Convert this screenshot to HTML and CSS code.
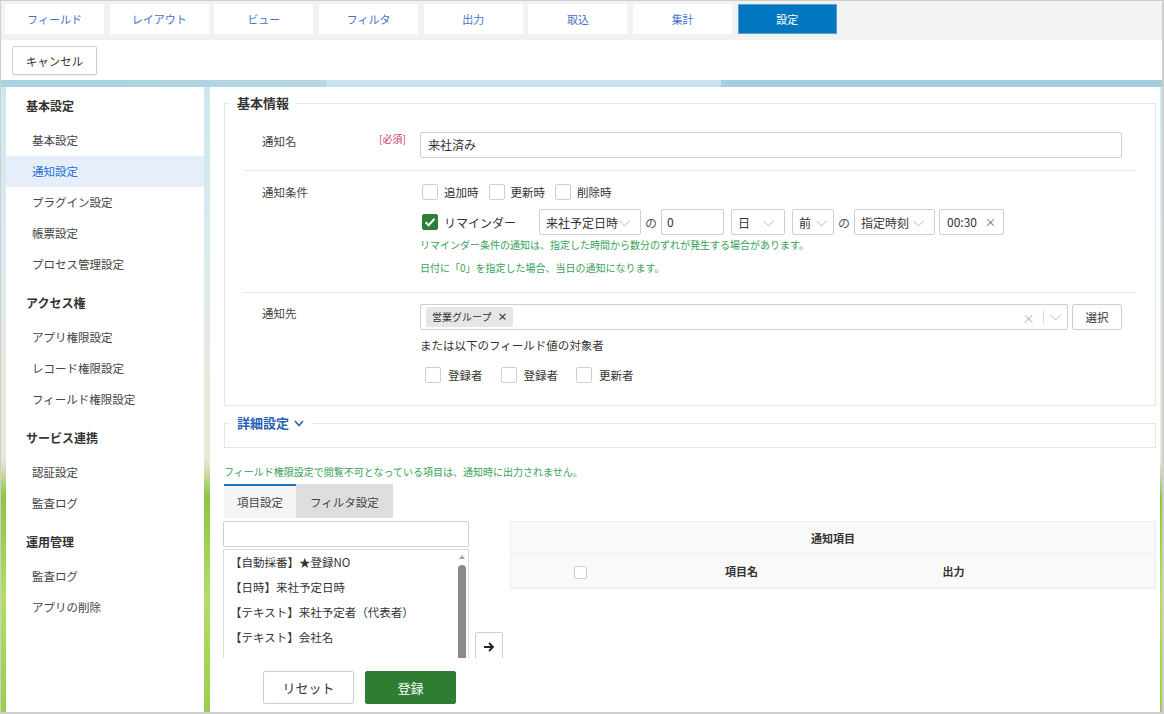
FILE: index.html
```html
<!DOCTYPE html>
<html lang="ja">
  <head>
    <title>通知設定</title>
    <meta charset="UTF-8" />
    <meta name="viewport" content="width=device-width, initial-scale=1.0" />
    <link rel="stylesheet" href="styles.css">
  </head>
  <body>
    <div class="frame">
      <div class="tabbar">
        <a class="tab">フィールド</a>
        <a class="tab">レイアウト</a>
        <a class="tab">ビュー</a>
        <a class="tab">フィルタ</a>
        <a class="tab">出力</a>
        <a class="tab">取込</a>
        <a class="tab">集計</a>
        <a class="tab active">設定</a>
      </div>

      <div class="toolbar">
        <button class="btn btn-cancel">キャンセル</button>
      </div>

      <div class="content">
        <div class="sidebar">
          <div class="side-head">基本設定</div>
          <div class="side-item">基本設定</div>
          <div class="side-item active">通知設定</div>
          <div class="side-item">プラグイン設定</div>
          <div class="side-item">帳票設定</div>
          <div class="side-item">プロセス管理設定</div>

          <div class="side-head">アクセス権</div>
          <div class="side-item">アプリ権限設定</div>
          <div class="side-item">レコード権限設定</div>
          <div class="side-item">フィールド権限設定</div>

          <div class="side-head">サービス連携</div>
          <div class="side-item">認証設定</div>
          <div class="side-item">監査ログ</div>

          <div class="side-head">運用管理</div>
          <div class="side-item">監査ログ</div>
          <div class="side-item">アプリの削除</div>
        </div>

        <div class="main">
          <div class="main-scroll">
            <fieldset class="box">
              <legend>基本情報</legend>

              <div class="row">
                <div class="row-label">通知名</div>
                <div class="row-req">[必須]</div>
                <div class="row-body">
                  <div class="input input-full">来社済み</div>
                </div>
              </div>

              <div class="row row-cond">
                <div class="row-label">通知条件</div>
                <div class="row-req"></div>
                <div class="row-body">
                  <div class="check-line">
                    <span class="cb"></span><span class="cb-text">追加時</span>
                    <span class="cb"></span><span class="cb-text">更新時</span>
                    <span class="cb"></span><span class="cb-text">削除時</span>
                  </div>
                  <div class="remind-line">
                    <span class="cb checked">
                      <svg width="16" height="16" viewBox="0 0 16 16"><polyline points="3.5,8.2 6.6,11.2 12.5,4.8" fill="none" stroke="#fff" stroke-width="2"/></svg>
                    </span>
                    <span class="remind-label">リマインダー</span>
                    <div class="select sel-base"><span>来社予定日時</span><svg class="chev" width="11" height="7" viewBox="0 0 11 7"><polyline points="0.5,0.8 5.5,6 10.5,0.8" fill="none" stroke="#bbb" stroke-width="1"/></svg></div>
                    <span class="no">の</span>
                    <div class="input input-num">0</div>
                    <div class="select sel-unit"><span>日</span><svg class="chev" width="11" height="7" viewBox="0 0 11 7"><polyline points="0.5,0.8 5.5,6 10.5,0.8" fill="none" stroke="#bbb" stroke-width="1"/></svg></div>
                    <div class="select sel-dir"><span>前</span><svg class="chev" width="11" height="7" viewBox="0 0 11 7"><polyline points="0.5,0.8 5.5,6 10.5,0.8" fill="none" stroke="#bbb" stroke-width="1"/></svg></div>
                    <span class="no">の</span>
                    <div class="select sel-time"><span>指定時刻</span><svg class="chev" width="11" height="7" viewBox="0 0 11 7"><polyline points="0.5,0.8 5.5,6 10.5,0.8" fill="none" stroke="#bbb" stroke-width="1"/></svg></div>
                    <div class="input input-time"><span>00:30</span><span class="clear">×</span></div>
                  </div>
                  <p class="note">リマインダー条件の通知は、指定した時間から数分のずれが発生する場合があります。</p>
                  <p class="note note-2">日付に「0」を指定した場合、当日の通知になります。</p>
                </div>
              </div>

              <div class="row row-last">
                <div class="row-label">通知先</div>
                <div class="row-req"></div>
                <div class="row-body">
                  <div class="dest-line">
                    <div class="multi">
                      <span class="tag">営業グループ<b>×</b></span>
                      <span class="multi-clear">×</span>
                      <span class="multi-sep"></span>
                      <svg class="chev" width="11" height="7" viewBox="0 0 11 7"><polyline points="0.5,0.8 5.5,6 10.5,0.8" fill="none" stroke="#bbb" stroke-width="1"/></svg>
                    </div>
                    <button class="btn btn-pick">選択</button>
                  </div>
                  <div class="dest-text">または以下のフィールド値の対象者</div>
                  <div class="check-line check-users">
                    <span class="cb"></span><span class="cb-text">登録者</span>
                    <span class="cb"></span><span class="cb-text">登録者</span>
                    <span class="cb"></span><span class="cb-text">更新者</span>
                  </div>
                </div>
              </div>
            </fieldset>

            <fieldset class="box box-detail">
              <legend>詳細設定 <svg width="10" height="7" viewBox="0 0 10 7"><polyline points="1,1 5,5.5 9,1" fill="none" stroke="#2a64b4" stroke-width="1.6"/></svg></legend>
            </fieldset>

            <p class="note note-field">フィールド権限設定で閲覧不可となっている項目は、通知時に出力されません。</p>

            <div class="subtabs">
              <div class="subtab active">項目設定</div>
              <div class="subtab">フィルタ設定</div>
            </div>

            <div class="work">
              <div class="pick-col">
                <div class="input input-search"></div>
                <div class="field-list">
                  <div class="field-items">
                    <div class="field-item">【自動採番】★登録NO</div>
                    <div class="field-item">【日時】来社予定日時</div>
                    <div class="field-item">【テキスト】来社予定者（代表者）</div>
                    <div class="field-item">【テキスト】会社名</div>
                  </div>
                  <div class="fake-scroll">
                    <span class="scroll-up"></span>
                    <span class="scroll-thumb"></span>
                  </div>
                </div>
              </div>
              <div class="move-col">
                <button class="btn btn-move">
                  <svg width="12" height="12" viewBox="0 0 12 12"><path d="M1 6 H10 M6 2 L10 6 L6 10" fill="none" stroke="#222" stroke-width="1.8"/></svg>
                </button>
              </div>
              <table class="notify-table">
                <tr>
                  <th colspan="4">通知項目</th>
                </tr>
                <tr class="sub-head">
                  <th class="col-check"><span class="cb cb-small"></span></th>
                  <th class="col-name">項目名</th>
                  <th class="col-out">出力</th>
                  <th></th>
                </tr>
              </table>
            </div>
          </div>

          <div class="footer">
            <button class="btn btn-reset">リセット</button>
            <button class="btn btn-save">登録</button>
          </div>
        </div>
      </div>
    </div>
  </body>
</html>
```

FILE: styles.css
```css
* {
  box-sizing: border-box;
}
body {
  margin: 0;
  font-family: "Noto Sans CJK JP", "Noto Sans", sans-serif;
  font-size: 11.5px;
  color: #333;
  background: #fff;
}
p {
  margin: 0;
}
.frame {
  width: 1164px;
  height: 714px;
  border: 1px solid #cfcfcf;
  border-right-width: 2px;
  border-bottom-width: 2px;
  display: flex;
  flex-direction: column;
  overflow: hidden;
}

/* top tabs */
.tabbar {
  height: 39px;
  flex-shrink: 0;
  background: #f2f2f2;
  display: flex;
  gap: 5.7px;
  padding: 3px 4px 0;
}
.tab {
  width: 99px;
  height: 30px;
  background: #fff;
  color: #4673c8;
  font-size: 11px;
  line-height: 30px;
  text-align: center;
}
.tab.active {
  background: #0277c0;
  border: 1px solid #5c9fd4;
  line-height: 28px;
  color: #fff;
}

.toolbar {
  height: 40px;
  flex-shrink: 0;
  background: #fff;
  padding: 6px 11px;
}
.btn {
  font-family: inherit;
  font-size: 11.5px;
  color: #333;
  background: #fff;
  border: 1px solid #cfcfcf;
  border-radius: 2px;
  padding: 0;
  cursor: pointer;
}
.btn-cancel {
  width: 85px;
  height: 29px;
  box-shadow: 0 1px 1px rgba(0,0,0,0.06);
}

/* background area */
.content {
  flex: 1;
  display: flex;
  gap: 6px;
  padding: 7px 2px 0 5px;
  min-height: 0;
  background:
    linear-gradient(to right, #a9d1e0 0, #b3d7e4 28%, #c9e3ec 28%, #c9e3ec 62%, #a3cfdf 62%, #a3cfdf 100%) top / 100% 7px no-repeat,
    linear-gradient(to bottom, #cde6ee 0%, #dcecef 30%, #ece8d9 50%, #ece8d9 60%, #8dc446 66%, #b3dc6a 82%, #9bcc4f 100%);
}

/* left menu */
.sidebar {
  width: 198px;
  flex-shrink: 0;
  background: #fff;
  padding-top: 4px;
}
.side-head {
  height: 30px;
  line-height: 30px;
  padding-left: 20px;
  font-size: 12px;
  font-weight: bold;
  color: #333;
  margin-bottom: 4px;
}
.side-item + .side-head {
  margin-top: 8px;
}
.side-item {
  height: 31px;
  line-height: 31px;
  padding-left: 26px;
  color: #444;
}
.side-item.active {
  background: #e7eefb;
  color: #2a6fd6;
}

/* main panel */
.main {
  flex: 1;
  background: #fff;
  display: flex;
  flex-direction: column;
  min-width: 0;
}
.main-scroll {
  flex: 1;
  overflow: hidden;
  padding: 7px 4px 0 14px;
}
.footer {
  height: 54px;
  flex-shrink: 0;
  background: #fff;
  display: flex;
  gap: 11px;
  padding: 13px 0 0 53px;
}

.box {
  margin: 0;
  padding: 8px 0 10px;
  border: 1px solid #e6e6e6;
  min-width: 0;
}
.box legend {
  margin-left: 5px;
  padding: 0 7px;
  font-size: 13px;
  line-height: 18px;
  font-weight: bold;
  color: #333;
}
.box-detail {
  margin-top: 8px;
  padding: 0 0 15px;
}
.box-detail legend {
  color: #2a64b4;
}
.box-detail legend svg {
  margin-left: 2px;
  vertical-align: 1px;
}

.row {
  display: grid;
  grid-template-columns: 117px 41px 1fr;
  margin: 0 20px 0 19px;
  padding: 12px 13px 12px 18px;
  border-bottom: 1px solid #e6e6e6;
}
.row-cond {
  padding-bottom: 14px;
}
.row-last {
  border-bottom: none;
  padding-top: 11px;
}
.row-label {
  line-height: 18px;
  color: #444;
}
.row-req {
  font-size: 10px;
  line-height: 14px;
  color: #c8415f;
}
.row-body {
  min-width: 0;
}

.input {
  height: 26px;
  border: 1px solid #cfcfcf;
  border-radius: 2px;
  background: #fff;
  line-height: 24px;
  padding: 0 7px;
  color: #333;
}
.input-full {
  width: 100%;
  font-size: 12px;
}

/* checkboxes */
.check-line {
  display: flex;
  align-items: center;
  height: 18px;
  padding-left: 2px;
}
.cb {
  width: 16px;
  height: 16px;
  flex-shrink: 0;
  border: 1px solid #cfcfcf;
  border-radius: 2px;
  background: #fff;
  display: inline-block;
}
.cb.checked {
  background: #2e7d32;
  border-color: #2e7d32;
}
.cb.checked svg {
  display: block;
  margin: -1px;
}
.cb-text {
  margin: 0 10px 0 6px;
}
.check-users {
  margin-top: 13px;
  height: 16px;
  padding-left: 5px;
}
.check-users .cb-text {
  margin: 0 18px 0 7px;
}

.remind-line {
  display: flex;
  align-items: center;
  height: 26px;
  margin-top: 8px;
  padding-left: 2px;
}
.remind-label {
  width: 95px;
  margin-left: 6px;
  font-size: 12px;
}
.select {
  height: 26px;
  border: 1px solid #cfcfcf;
  border-radius: 2px;
  display: flex;
  align-items: center;
  justify-content: space-between;
  padding: 0 10px 0 6px;
  font-size: 12px;
  flex-shrink: 0;
}
.select .chev {
  margin-top: 2px;
}
.sel-base {
  width: 102px;
}
.sel-unit {
  width: 54px;
  margin-left: 7px;
}
.sel-dir {
  width: 42px;
  margin-left: 7px;
  padding-right: 6px;
}
.sel-time {
  width: 81px;
}
.no {
  margin: 0 4px;
  font-size: 12px;
  color: #555;
}
.input-num {
  width: 63px;
  padding-left: 5px;
  font-size: 12px;
}
.input-time {
  width: 65px;
  margin-left: 4px;
  display: flex;
  justify-content: space-between;
  font-size: 12px;
}
.clear {
  color: #666;
  font-size: 11px;
}

.note {
  font-size: 10px;
  line-height: 20px;
  color: #38a15a;
}
.note-2 {
  margin-top: 3px;
}
.note-field {
  margin-top: 16px;
  line-height: 16px;
}

/* destination */
.dest-line {
  display: flex;
  height: 26px;
}
.multi {
  flex: 1;
  display: flex;
  align-items: center;
  border: 1px solid #cfcfcf;
  border-radius: 2px;
  padding: 0 6px 0 5px;
}
.tag {
  height: 20px;
  line-height: 20px;
  background: #e6e6e6;
  border-radius: 2px;
  padding: 0 6px;
  font-size: 10px;
}
.tag b {
  margin-left: 6px;
  font-size: 10px;
}
.multi-clear {
  margin-left: auto;
  color: #bbb;
  font-size: 13px;
}
.multi-sep {
  width: 1px;
  height: 14px;
  background: #ddd;
  margin: 0 6px 0 8px;
}
.btn-pick {
  width: 50px;
  height: 26px;
  margin-left: 4px;
  font-size: 11.5px;
}
.dest-text {
  margin-top: 6px;
  line-height: 18px;
}

/* item tabs */
.subtabs {
  display: flex;
  margin-top: 4px;
  height: 34px;
}
.subtab {
  line-height: 32px;
  padding: 0 14px;
  background: #dedede;
  border-top: 2px solid #dedede;
  color: #444;
}
.subtab.active {
  background: #f4f4f4;
  border-top-color: #1a75bb;
  padding: 0 13px;
}

.work {
  display: flex;
  align-items: flex-start;
  margin-top: 3px;
  margin-left: -1px;
}
.pick-col {
  width: 246px;
  flex-shrink: 0;
}
.input-search {
  width: 100%;
}
.field-list {
  margin-top: 2px;
  height: 170px;
  border: 1px solid #dcdcdc;
  display: flex;
}
.field-items {
  flex: 1;
  overflow: hidden;
}
.field-item {
  line-height: 25px;
  padding-left: 6px;
  white-space: nowrap;
  color: #333;
}
.fake-scroll {
  width: 13px;
  display: flex;
  flex-direction: column;
  align-items: center;
  padding-top: 5px;
}
.scroll-up {
  width: 0;
  height: 0;
  border-left: 3px solid transparent;
  border-right: 3px solid transparent;
  border-bottom: 4px solid #a3a3a3;
}
.scroll-thumb {
  width: 8px;
  height: 140px;
  margin-top: 6px;
  border-radius: 4px;
  background: #8a8a8a;
}

.move-col {
  width: 41px;
  flex-shrink: 0;
  padding: 111px 0 0 6px;
}
.btn-move {
  width: 28px;
  height: 30px;
  display: flex;
  align-items: center;
  justify-content: center;
}

.notify-table {
  flex: 1;
  border-collapse: collapse;
  background: #f9f9f9;
  border: 1px solid #eeeeee;
  table-layout: fixed;
}
.notify-table th {
  font-size: 11px;
  font-weight: bold;
  color: #333;
  text-align: center;
  padding: 0;
}
.notify-table tr:first-child th {
  height: 32px;
  border-bottom: 1px solid #eeeeee;
}
.sub-head th {
  height: 35px;
}
.col-check {
  width: 140px;
}
.col-name {
  width: 182px;
}
.col-out {
  width: 242px;
}
.cb-small {
  width: 13px;
  height: 13px;
  vertical-align: middle;
  margin-top: -2px;
}

.btn-reset,
.btn-save {
  width: 91px;
  height: 33px;
  font-size: 13px;
}
.btn-save {
  background: #2e7d32;
  border-color: #2e7d32;
  color: #fff;
}
```
